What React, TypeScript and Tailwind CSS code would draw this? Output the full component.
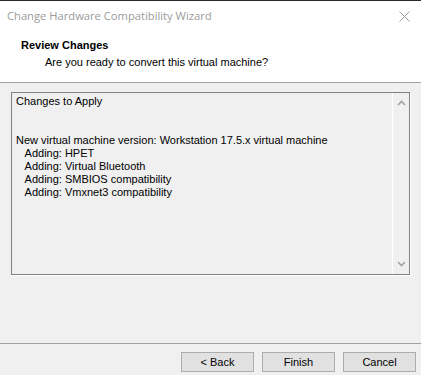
const lines = [
  'Changes to Apply',
  '',
  '',
  'New virtual machine version: Workstation 17.5.x virtual machine',
  '   Adding: HPET',
  '   Adding: Virtual Bluetooth',
  '   Adding: SMBIOS compatibility',
  '   Adding: Vmxnet3 compatibility',
];

const Chevron = ({ up }: { up?: boolean }) => (
  <svg width="9" height="6" viewBox="0 0 9 6" className="block">
    <path
      d={up ? 'M1 5 L4.5 1.5 L8 5' : 'M1 1 L4.5 4.5 L8 1'}
      fill="none"
      stroke="#a3a3a3"
      strokeWidth={1.6}
    />
  </svg>
);

const Button = ({ label }: { label: string }) => (
  <button className="w-[73px] h-[20px] bg-[#e1e1e1] border border-[#adadad] text-[11px] text-black leading-none">
    {label}
  </button>
);

export default function App() {
  return (
    <div
      className="w-[421px] h-[375px] flex flex-col bg-[#f0f0f0] text-black overflow-hidden"
      style={{ fontFamily: '"Liberation Sans", Arial, sans-serif' }}
    >
      <div className="h-px bg-[#2b2b2b]" />
      {/* title bar */}
      <div
        className="h-[30px] bg-white flex items-center justify-between pl-[7px] pr-[11px]"
        style={{ fontFamily: '"Open Sans", "Noto Sans", sans-serif' }}
      >
        <span className="text-[11.2px] text-[#9b9b9b]">Change Hardware Compatibility Wizard</span>
        <svg width="11" height="11" viewBox="0 0 11 11">
          <path d="M0.5 0.5 L10.5 10.5 M10.5 0.5 L0.5 10.5" stroke="#9b9b9b" strokeWidth={1} />
        </svg>
      </div>
      {/* header */}
      <div className="h-[52px] bg-white border-b border-[#a0a0a0] pt-[7px] text-[11px]">
        <div className="pl-[21px] font-bold leading-[14px]">Review Changes</div>
        <div className="pl-[45px] mt-[3px] leading-[14px]">Are you ready to convert this virtual machine?</div>
      </div>
      {/* body */}
      <div className="px-[11px] pt-[9px]">
        <div className="h-[183px] flex border border-[#828282] shadow-[1px_1px_0_#ffffff]">
          <div className="flex-1 pl-[4px] pt-[2px] text-[11px] leading-[13px] whitespace-pre">
            {lines.map((l, i) => (
              <div key={i} className="h-[13px]">
                {l}
              </div>
            ))}
          </div>
          <div className="w-[17px] border-l border-white flex flex-col items-center justify-between py-[7px]">
            <Chevron up />
            <Chevron />
          </div>
        </div>
      </div>
      <div className="flex-1" />
      {/* footer */}
      <div className="border-t border-[#a0a0a0] h-[32px] flex items-start justify-end gap-[8px] pr-[5px] pt-[8px]">
        <Button label="< Back" />
        <Button label="Finish" />
        <Button label="Cancel" />
      </div>
    </div>
  );
}
